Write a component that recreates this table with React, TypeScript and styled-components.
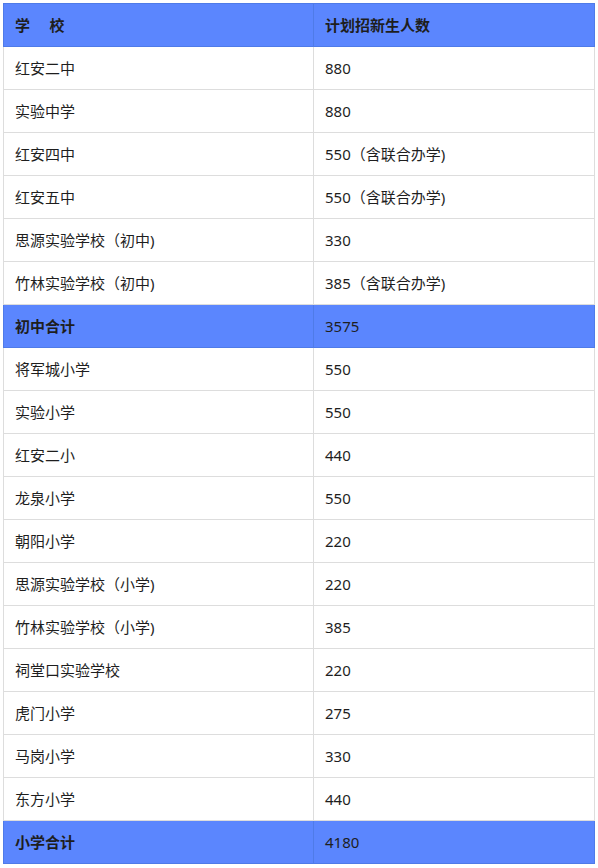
import React from 'react'
import styled, { createGlobalStyle } from 'styled-components'

const GlobalStyle = createGlobalStyle`
  html, body {
    margin: 0;
    padding: 0;
    background: #ffffff;
  }
  body {
    font-family: "Noto Sans", "Noto Sans CJK SC", sans-serif;
    color: #222;
  }
`

const Wrapper = styled.div`
  padding: 3px 4px 0 3px;
`

const Table = styled.table`
  width: 591px;
  border-collapse: collapse;
  table-layout: fixed;
  font-size: 15px;
`

const Row = styled.tr<{ $total?: boolean }>`
  background: ${({ $total }) => ($total ? '#5b86fe' : '#ffffff')};
`

const Cell = styled.td<{ $total?: boolean; $bold?: boolean }>`
  height: 43px;
  padding: 0 11px;
  box-sizing: border-box;
  border: 1px solid ${({ $total }) => ($total ? '#4f7be8' : '#dddddd')};
  font-weight: ${({ $bold }) => ($bold ? 700 : 400)};
  color: #1e1e1e;
  line-height: 20px;
  white-space: nowrap;
  vertical-align: middle;
`

const rows: [string, string, boolean?][] = [
  ['红安二中', '880'],
  ['实验中学', '880'],
  ['红安四中', '550（含联合办学)'],
  ['红安五中', '550（含联合办学)'],
  ['思源实验学校（初中)', '330'],
  ['竹林实验学校（初中)', '385（含联合办学)'],
  ['初中合计', '3575', true],
  ['将军城小学', '550'],
  ['实验小学', '550'],
  ['红安二小', '440'],
  ['龙泉小学', '550'],
  ['朝阳小学', '220'],
  ['思源实验学校（小学)', '220'],
  ['竹林实验学校（小学)', '385'],
  ['祠堂口实验学校', '220'],
  ['虎门小学', '275'],
  ['马岗小学', '330'],
  ['东方小学', '440'],
  ['小学合计', '4180', true],
]

export default function App() {
  return (
    <Wrapper>
      <GlobalStyle />
      <Table>
        <colgroup>
          <col style={{ width: 310 }} />
          <col style={{ width: 281 }} />
        </colgroup>
        <tbody>
          <Row $total>
            <Cell $total $bold>学&nbsp;&nbsp;&nbsp;&nbsp;&nbsp;校</Cell>
            <Cell $total $bold>计划招新生人数</Cell>
          </Row>
          {rows.map(([name, count, total]) => (
            <Row key={name} $total={total}>
              <Cell $total={total} $bold={total}>{name}</Cell>
              <Cell $total={total}>{count}</Cell>
            </Row>
          ))}
        </tbody>
      </Table>
    </Wrapper>
  )
}
